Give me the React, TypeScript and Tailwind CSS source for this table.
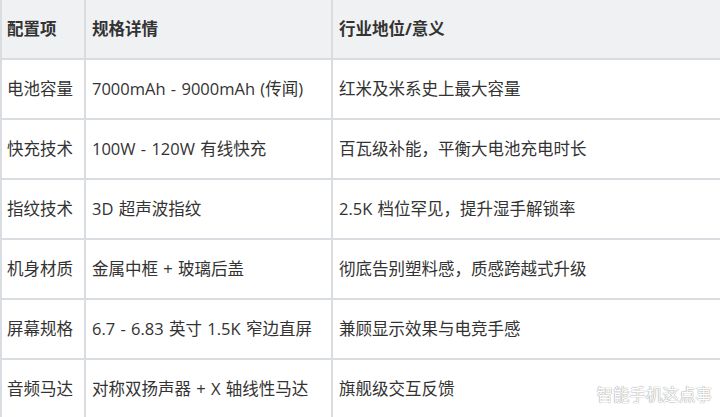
const ROWS = [
  ['电池容量', '7000mAh - 9000mAh (传闻)', '红米及米系史上最大容量'],
  ['快充技术', '100W - 120W 有线快充', '百瓦级补能，平衡大电池充电时长'],
  ['指纹技术', '3D 超声波指纹', '2.5K 档位罕见，提升湿手解锁率'],
  ['机身材质', '金属中框 + 玻璃后盖', '彻底告别塑料感，质感跨越式升级'],
  ['屏幕规格', '6.7 - 6.83 英寸 1.5K 窄边直屏', '兼顾显示效果与电竞手感'],
  ['音频马达', '对称双扬声器 + X 轴线性马达', '旗舰级交互反馈'],
];

function Row({ cells, head }: { cells: string[]; head?: boolean }) {
  return (
    <div
      className={`flex h-[60px] border-b-2 border-[#d9dce1] ${head ? 'bg-[#f0f1f3] font-bold' : 'bg-white'}`}
    >
      <div className="w-[84px] shrink-0 border-l-2 border-[#d9dce1] pl-[5px] flex items-center">{cells[0]}</div>
      <div className="w-[247px] shrink-0 border-l-2 border-[#d9dce1] pl-[6px] flex items-center">{cells[1]}</div>
      <div className="flex-1 border-l-2 border-[#d9dce1] pl-[6px] flex items-center">{cells[2]}</div>
    </div>
  );
}

export default function App() {
  return (
    <div
      className="relative w-[720px] h-[417px] overflow-hidden bg-white text-[16.5px] text-[#333] [word-spacing:1px]"
      style={{ fontFamily: '"Open Sans", "Noto Sans CJK SC", sans-serif' }}
    >
      <Row head cells={['配置项', '规格详情', '行业地位/意义']} />
      {ROWS.map(r => (
        <Row key={r[0]} cells={r} />
      ))}
      <div className="absolute right-[8px] bottom-[9px] text-[16.5px] text-white [text-shadow:0_0_1px_#999,0_0_1px_#999]">
        智能手机这点事
      </div>
    </div>
  );
}
